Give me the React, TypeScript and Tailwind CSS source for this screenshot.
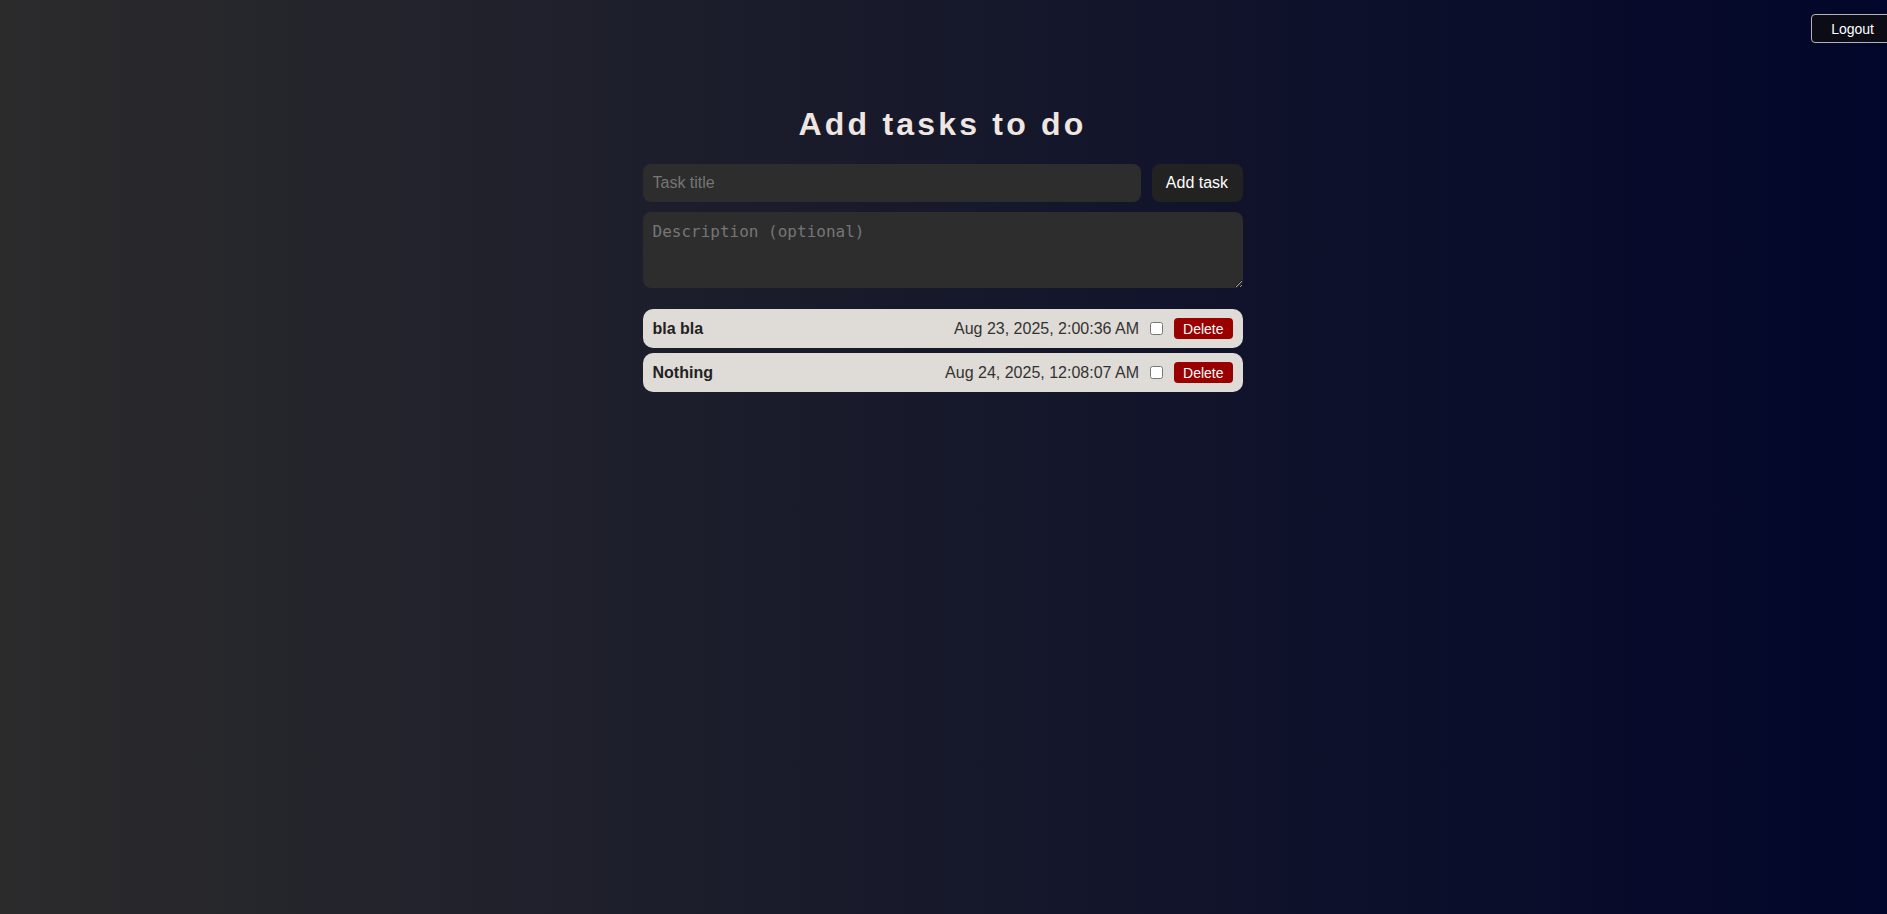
import { useState } from 'react';

type Task = {
    id: number;
    title: string;
    createdAt: string;
    done: boolean;
};

const initialTasks: Task[] = [
    { id: 1, title: 'bla bla', createdAt: 'Aug 23, 2025, 2:00:36 AM', done: false },
    { id: 2, title: 'Nothing', createdAt: 'Aug 24, 2025, 12:08:07 AM', done: false },
];

export default function App() {
    const [tasks, setTasks] = useState<Task[]>(initialTasks);
    const [title, setTitle] = useState('');
    const [description, setDescription] = useState('');

    const addTask = () => {
        if (!title.trim()) return;
        setTasks((prev) => [
            ...prev,
            { id: Date.now(), title: title.trim(), createdAt: new Date().toLocaleString('en-US', { dateStyle: 'medium', timeStyle: 'medium' }), done: false },
        ]);
        setTitle('');
        setDescription('');
    };

    return (
        <div className="relative h-screen w-full overflow-hidden bg-[linear-gradient(to_right,#2b2b2c,#02062a)] font-['Liberation_Sans',Arial,sans-serif]">
            <button className="absolute top-[14px] right-[-7px] h-[29px] rounded-[4px] border border-[#b4b4b4] bg-[#0b0c16] px-[19px] text-[14px] leading-none text-white">
                Logout
            </button>

            <div className="mx-auto w-[600px] -translate-x-px pt-[106px]">
                <h1 className="mb-[21px] text-center text-[32px] leading-[37px] font-bold tracking-[0.1em] text-[#efe6e1]">
                    Add tasks to do
                </h1>

                <div className="flex gap-[11px]">
                    <input
                        value={title}
                        onChange={(event) => setTitle(event.target.value)}
                        placeholder="Task title"
                        className="h-[38px] flex-1 rounded-[8px] bg-[#2d2d2d] px-[10px] text-[16px] text-white outline-none placeholder:text-[#767676]"
                    />
                    <button
                        onClick={addTask}
                        className="h-[38px] w-[91px] rounded-[8px] bg-[#222222] text-[16px] text-white"
                    >
                        Add task
                    </button>
                </div>

                <textarea
                    value={description}
                    onChange={(event) => setDescription(event.target.value)}
                    placeholder="Description (optional)"
                    className="mt-[10px] block h-[76px] w-full rounded-[8px] bg-[#2d2d2d] px-[10px] pt-[10px] pb-[6px] font-['DejaVu_Sans_Mono',monospace] text-[16px] leading-[19px] text-white outline-none placeholder:text-[#767676]"
                />

                <div className="mt-[21px] flex flex-col gap-[5px]">
                    {tasks.map((task) => (
                        <div
                            key={task.id}
                            className="flex h-[39px] items-center rounded-[10px] bg-[#dfdbd6] px-[10px]"
                        >
                            <span className="text-[16px] font-bold text-[#222222]">{task.title}</span>
                            <span className="ml-auto text-[16px] text-[#333333]">{task.createdAt}</span>
                            <input
                                type="checkbox"
                                checked={task.done}
                                onChange={() =>
                                    setTasks((prev) =>
                                        prev.map((t) => (t.id === task.id ? { ...t, done: !t.done } : t))
                                    )
                                }
                                className="ml-[11px] h-[13px] w-[13px]"
                            />
                            <button
                                onClick={() => setTasks((prev) => prev.filter((t) => t.id !== task.id))}
                                className="ml-[11px] h-[21px] rounded-[4px] bg-[#990000] px-[9px] text-[14px] leading-none text-white"
                            >
                                Delete
                            </button>
                        </div>
                    ))}
                </div>
            </div>
        </div>
    );
}
